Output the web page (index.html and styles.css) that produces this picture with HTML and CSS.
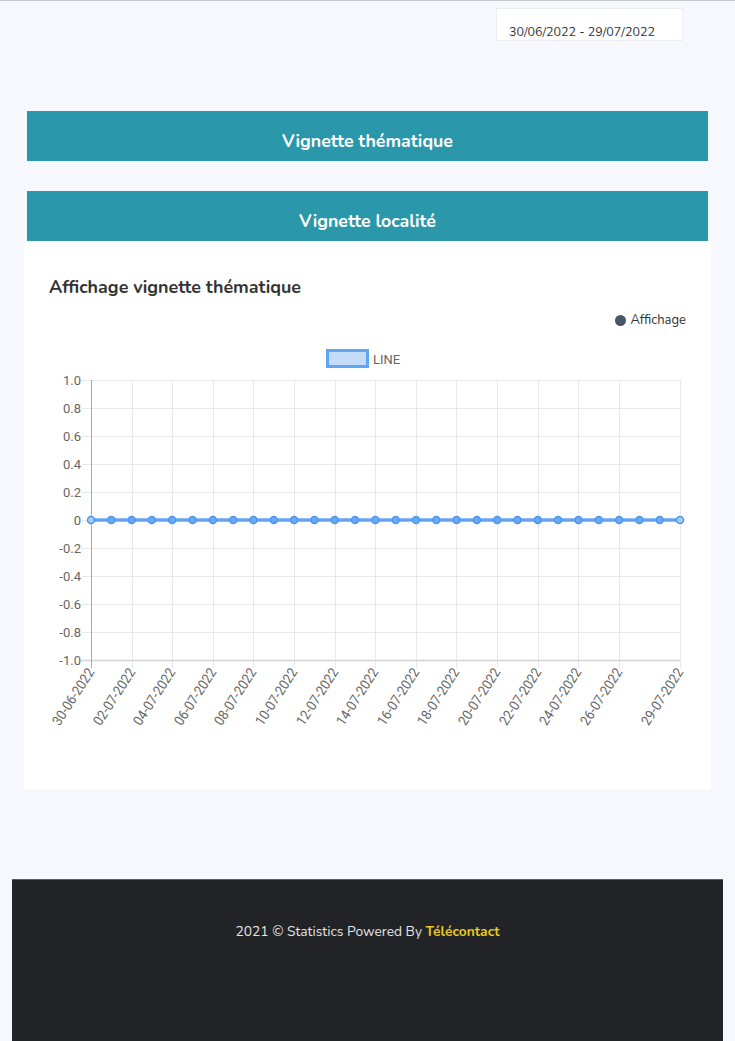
FILE: index.html
```html
<!DOCTYPE html>
<html lang="fr">
<head>
<meta charset="utf-8">
<title>Statistics</title>
<link rel="stylesheet" href="styles.css">
</head>
<body>
<div class="topline"></div>
<div class="toolbar">
  <div class="daterange">30/06/2022 - 29/07/2022</div>
</div>
<main class="content">
  <div class="bar bar-first">Vignette thématique</div>
  <div class="bar bar-second">Vignette localité</div>
  <section class="card">
    <h2 class="card-title">Affichage vignette thématique</h2>
    <div class="legend-row"><span class="dot"></span>Affichage</div>
    <svg class="chart" width="687" height="449" viewBox="24 340 687 449" xmlns="http://www.w3.org/2000/svg">
      <rect x="327.5" y="350.5" width="40" height="16" fill="#c4dcf8" stroke="#5ea5f4" stroke-width="3"/>
      <text class="lbl" x="373" y="364">LINE</text>
      <g stroke="#e8e8e8" stroke-width="1">
        <line x1="81" y1="380.5" x2="680" y2="380.5"/>
        <line x1="81" y1="408.5" x2="680" y2="408.5"/>
        <line x1="81" y1="436.5" x2="680" y2="436.5"/>
        <line x1="81" y1="464.5" x2="680" y2="464.5"/>
        <line x1="81" y1="492.5" x2="680" y2="492.5"/>
        <line x1="81" y1="520.5" x2="680" y2="520.5"/>
        <line x1="81" y1="548.5" x2="680" y2="548.5"/>
        <line x1="81" y1="576.5" x2="680" y2="576.5"/>
        <line x1="81" y1="604.5" x2="680" y2="604.5"/>
        <line x1="81" y1="632.5" x2="680" y2="632.5"/>
        <line x1="132.5" y1="380" x2="132.5" y2="668"/>
        <line x1="172.5" y1="380" x2="172.5" y2="668"/>
        <line x1="213.5" y1="380" x2="213.5" y2="668"/>
        <line x1="253.5" y1="380" x2="253.5" y2="668"/>
        <line x1="294.5" y1="380" x2="294.5" y2="668"/>
        <line x1="335.5" y1="380" x2="335.5" y2="668"/>
        <line x1="375.5" y1="380" x2="375.5" y2="668"/>
        <line x1="416.5" y1="380" x2="416.5" y2="668"/>
        <line x1="456.5" y1="380" x2="456.5" y2="668"/>
        <line x1="497.5" y1="380" x2="497.5" y2="668"/>
        <line x1="538.5" y1="380" x2="538.5" y2="668"/>
        <line x1="578.5" y1="380" x2="578.5" y2="668"/>
        <line x1="619.5" y1="380" x2="619.5" y2="668"/>
        <line x1="680.5" y1="380" x2="680.5" y2="668"/>
      </g>
      <line x1="81" y1="660.5" x2="680" y2="660.5" stroke="#d4d4d4" stroke-width="1.5"/>
      <line x1="91.5" y1="380" x2="91.5" y2="668" stroke="#a8a8a8" stroke-width="1"/>
      <g class="lbl" text-anchor="end">
        <text x="81" y="385">1.0</text>
        <text x="81" y="413">0.8</text>
        <text x="81" y="441">0.6</text>
        <text x="81" y="469">0.4</text>
        <text x="81" y="497">0.2</text>
        <text x="81" y="525">0</text>
        <text x="81" y="553">-0.2</text>
        <text x="81" y="581">-0.4</text>
        <text x="81" y="609">-0.6</text>
        <text x="81" y="637">-0.8</text>
        <text x="81" y="665">-1.0</text>
      </g>
      <line x1="91" y1="520" x2="680" y2="520" stroke="#4a95ef" stroke-width="3.5" stroke-opacity="0.85"/>
      <g fill="#6aa9f2" stroke="#4d96ee" stroke-width="1.5">
        <circle cx="91" cy="520" r="3.5" fill="#a8cdf7"/>
        <circle cx="111.3" cy="520" r="3.5"/>
        <circle cx="131.6" cy="520" r="3.5"/>
        <circle cx="151.9" cy="520" r="3.5"/>
        <circle cx="172.2" cy="520" r="3.5"/>
        <circle cx="192.6" cy="520" r="3.5"/>
        <circle cx="212.9" cy="520" r="3.5"/>
        <circle cx="233.2" cy="520" r="3.5"/>
        <circle cx="253.5" cy="520" r="3.5"/>
        <circle cx="273.8" cy="520" r="3.5"/>
        <circle cx="294.1" cy="520" r="3.5"/>
        <circle cx="314.4" cy="520" r="3.5"/>
        <circle cx="334.7" cy="520" r="3.5"/>
        <circle cx="355.0" cy="520" r="3.5"/>
        <circle cx="375.3" cy="520" r="3.5"/>
        <circle cx="395.7" cy="520" r="3.5"/>
        <circle cx="416.0" cy="520" r="3.5"/>
        <circle cx="436.3" cy="520" r="3.5"/>
        <circle cx="456.6" cy="520" r="3.5"/>
        <circle cx="476.9" cy="520" r="3.5"/>
        <circle cx="497.2" cy="520" r="3.5"/>
        <circle cx="517.5" cy="520" r="3.5"/>
        <circle cx="537.8" cy="520" r="3.5"/>
        <circle cx="558.1" cy="520" r="3.5"/>
        <circle cx="578.4" cy="520" r="3.5"/>
        <circle cx="598.8" cy="520" r="3.5"/>
        <circle cx="619.1" cy="520" r="3.5"/>
        <circle cx="639.4" cy="520" r="3.5"/>
        <circle cx="659.7" cy="520" r="3.5"/>
        <circle cx="680" cy="520" r="3.5" fill="#a8cdf7"/>
      </g>
      <g class="lbl xl" text-anchor="end">
        <text transform="translate(95 672) rotate(-57) scale(0.92 1)">30-06-2022</text>
        <text transform="translate(136 672) rotate(-57) scale(0.92 1)">02-07-2022</text>
        <text transform="translate(176 672) rotate(-57) scale(0.92 1)">04-07-2022</text>
        <text transform="translate(217 672) rotate(-57) scale(0.92 1)">06-07-2022</text>
        <text transform="translate(257 672) rotate(-57) scale(0.92 1)">08-07-2022</text>
        <text transform="translate(298 672) rotate(-57) scale(0.92 1)">10-07-2022</text>
        <text transform="translate(339 672) rotate(-57) scale(0.92 1)">12-07-2022</text>
        <text transform="translate(379 672) rotate(-57) scale(0.92 1)">14-07-2022</text>
        <text transform="translate(420 672) rotate(-57) scale(0.92 1)">16-07-2022</text>
        <text transform="translate(460 672) rotate(-57) scale(0.92 1)">18-07-2022</text>
        <text transform="translate(501 672) rotate(-57) scale(0.92 1)">20-07-2022</text>
        <text transform="translate(542 672) rotate(-57) scale(0.92 1)">22-07-2022</text>
        <text transform="translate(582 672) rotate(-57) scale(0.92 1)">24-07-2022</text>
        <text transform="translate(623 672) rotate(-57) scale(0.92 1)">26-07-2022</text>
        <text transform="translate(684 672) rotate(-57) scale(0.92 1)">29-07-2022</text>
      </g>
    </svg>
  </section>
</main>
<footer class="footer">
  <p class="footer-text">2021 © Statistics Powered By <strong class="brand">Télécontact</strong></p>
</footer>
</body>
</html>
```

FILE: styles.css
```css
html, body {
  margin: 0;
  padding: 0;
}
body {
  background: #f7f8fd;
  font-family: "Nunito", "Lato", "Open Sans", sans-serif;
  color: #333;
  width: 735px;
  height: 1041px;
  overflow: hidden;
  display: flex;
  flex-direction: column;
}
.topline {
  height: 1px;
  background: #c8c8cc;
}
.toolbar {
  display: flex;
  justify-content: flex-end;
  padding: 7px 52px 0 0;
}
.daterange {
  width: 187px;
  height: 33px;
  box-sizing: border-box;
  background: #fff;
  border: 1px solid #ecedf2;
  font-size: 12.5px;
  color: #333;
  padding: 14px 0 0 12px;
  line-height: 17px;
}
.content {
  padding: 70px 24px 0 24px;
  display: flex;
  flex-direction: column;
}
.bar {
  margin: 0 3px;
  height: 50px;
  background: #2b97aa;
  color: #fff;
  font-weight: 700;
  font-size: 17.8px;
  display: flex;
  align-items: center;
  justify-content: center;
  padding-top: 10px;
  box-sizing: border-box;
}
.bar-first {
  margin-bottom: 30px;
}
.card {
  background: #fff;
  height: 548px;
  display: flex;
  flex-direction: column;
}
.card-title {
  margin: 35px 0 0 25px;
  font-size: 17.9px;
  font-weight: 700;
  color: #333;
  line-height: 22px;
}
.legend-row {
  align-self: flex-end;
  margin: 13px 25px 0 0;
  font-size: 13px;
  color: #333;
  display: flex;
  align-items: center;
  gap: 4px;
  line-height: 18px;
}
.dot {
  width: 11px;
  height: 11px;
  border-radius: 50%;
  background: #4b5568;
}
.chart {
  display: block;
  margin-top: 11px;
}
.lbl {
  font-family: "Roboto", "Liberation Sans", sans-serif;
  font-size: 13px;
  fill: #666;
}
.xl text {
  font-size: 14px;
}
.footer {
  margin: 90px 12px 0 12px;
  flex: 1;
  background: #222327;
  border-top: 1px solid #5a5b60;
  display: flex;
  justify-content: center;
}
.footer-text {
  margin: 43px 0 0 0;
  font-size: 13.8px;
  color: #e3e3e3;
  line-height: 18px;
}
.brand {
  color: #e8cc1c;
  font-weight: 700;
}
```
